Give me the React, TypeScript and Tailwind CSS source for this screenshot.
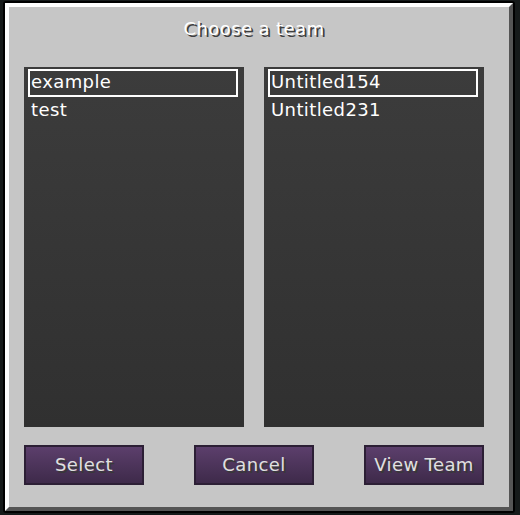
import React from "react";

const font = { fontFamily: '"DejaVu Sans", "Liberation Sans", sans-serif' };

const TeamList = ({ items, selected }: { items: string[]; selected: number }) => (
  <div className="flex h-[360px] w-[220px] flex-col bg-gradient-to-b from-[#3c3c3c] to-[#303030] pl-[4px] pr-[6px] pt-[2px]">
    {items.map((name, i) => (
      <div
        key={name}
        className={`h-[28px] border-2 pb-[2px] pl-[1px] text-[18px] leading-[22px] tracking-[0.4px] text-white ${
          i === selected ? "border-white" : "border-transparent"
        }`}
      >
        {name}
      </div>
    ))}
  </div>
);

const McButton = ({ label }: { label: string }) => (
  <button className="flex h-[40px] w-[120px] items-center justify-center border-2 border-[#2c1f35] bg-gradient-to-b from-[#5c3f6c] to-[#3e2a4a] text-[18px] leading-[36px] tracking-[0.4px] text-[#e0e0e0] [text-shadow:2px_2px_0_#383838]">
    {label}
  </button>
);

export default function App() {
  return (
    <div className="h-[515px] w-[520px] overflow-hidden bg-[#161a1a] pl-[3px] pt-[1px]" style={font}>
      <div className="h-[512px] w-[512px] rounded-[3px] border-2 border-black">
        <div className="h-full w-full border-4 border-t-white border-l-white border-r-[#555555] border-b-[#555555] bg-[#c6c6c6] pl-[15px] pt-[12px]">
          <div className="w-[460px]">
            <h1 className="text-center text-[18px] leading-[20px] tracking-[0.4px] text-white [text-shadow:2px_2px_0_#3f3f3f]">
              Choose a team
            </h1>
            <div className="mt-[28px] flex gap-[20px]">
              <TeamList items={["example", "test"]} selected={0} />
              <TeamList items={["Untitled154", "Untitled231"]} selected={0} />
            </div>
            <div className="mt-[18px] flex justify-between">
              <McButton label="Select" />
              <McButton label="Cancel" />
              <McButton label="View Team" />
            </div>
          </div>
        </div>
      </div>
    </div>
  );
}
